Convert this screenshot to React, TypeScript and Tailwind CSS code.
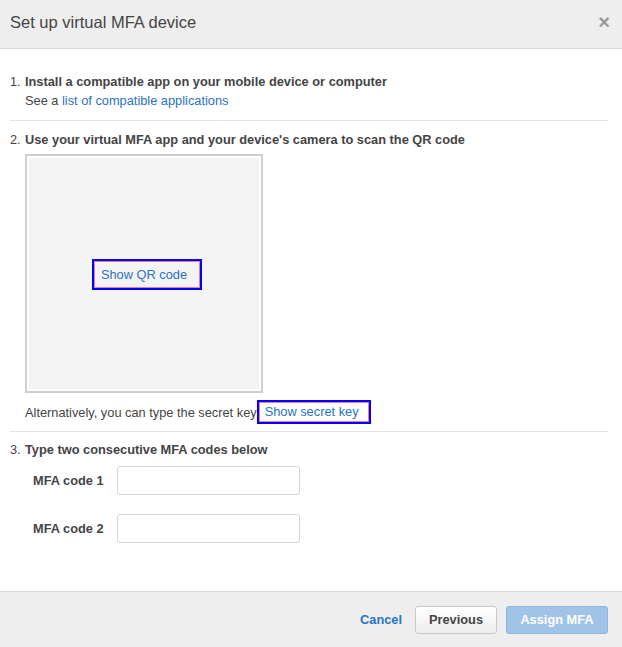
import React from "react";

const font = { fontFamily: '"Liberation Sans", Arial, sans-serif' };

const App = () => {
  return (
    <div
      className="w-[622px] h-[647px] flex flex-col bg-white text-[12.8px] leading-[19px] text-[#444]"
      style={font}
    >
      {/* Header */}
      <div className="h-[49px] shrink-0 bg-[#eeeeee] border-b border-[#d9d9d9] flex items-start justify-between pl-[10px] pr-[12px] pt-[12px]">
        <h1 className="text-[16.5px] leading-[20px] text-[#444]">Set up virtual MFA device</h1>
        <button className="text-[#999] text-[20px] leading-[20px] font-bold">×</button>
      </div>

      {/* Body */}
      <div className="flex-1 pl-[10px] pr-[14px] pt-[23px]">
        {/* Step 1 */}
        <div className="flex">
          <span className="w-[15px] shrink-0">1.</span>
          <div>
            <div className="font-bold">Install a compatible app on your mobile device or computer</div>
            <div>
              See a <a className="text-[#2a73c5] cursor-pointer">list of compatible applications</a>
            </div>
          </div>
        </div>

        <div className="border-t border-[#e3e3e3] mt-[10px] mb-[9px]" />

        {/* Step 2 */}
        <div className="flex">
          <span className="w-[15px] shrink-0">2.</span>
          <div>
            <div className="font-bold">Use your virtual MFA app and your device's camera to scan the QR code</div>
            <div className="mt-[5px] w-[238px] h-[239px] border-2 border-[#cfcfcf] bg-white p-[2px]">
              <div className="w-full h-full bg-[#f4f4f4] flex items-center justify-center pl-[6px] pt-[1px]">
                <span className="border-2 border-[#0000ff] inline-block">
                  <span className="block border border-[#f08080] pl-[6px] pr-[12px] pt-[4px] pb-[3px] text-[#2a73c5] leading-[18px]">
                    Show QR code
                  </span>
                </span>
              </div>
            </div>
            <div className="mt-[7px] flex items-center">
              <span>Alternatively, you can type the secret key</span>
              <span className="border-2 border-[#0000ff] inline-block">
                <span className="block border border-[#f08080] pl-[5px] pr-[9px] text-[#2a73c5] leading-[18px]">
                  Show secret key
                </span>
              </span>
            </div>
          </div>
        </div>

        <div className="border-t border-[#e3e3e3] mt-[7px] mb-[8px]" />

        {/* Step 3 */}
        <div className="flex">
          <span className="w-[15px] shrink-0">3.</span>
          <div>
            <div className="font-bold">Type two consecutive MFA codes below</div>
            <div className="mt-[7px] pl-[8px] flex flex-col gap-[19px]">
              <label className="flex items-center">
                <span className="w-[84px] font-bold">MFA code 1</span>
                <input
                  type="text"
                  className="w-[183px] h-[29px] border border-[#d5d5d5] rounded-[3px] px-2 outline-none"
                />
              </label>
              <label className="flex items-center">
                <span className="w-[84px] font-bold">MFA code 2</span>
                <input
                  type="text"
                  className="w-[183px] h-[29px] border border-[#d5d5d5] rounded-[3px] px-2 outline-none"
                />
              </label>
            </div>
          </div>
        </div>
      </div>

      {/* Footer */}
      <div className="h-[56px] shrink-0 bg-[#eeeeee] border-t border-[#d9d9d9] flex items-center justify-end pr-[14px]">
        <button className="font-bold text-[#2a73c5] mr-[13px]">Cancel</button>
        <button className="h-[28px] w-[82px] rounded-[3px] border border-[#c8c8c8] bg-gradient-to-b from-white to-[#ededed] font-bold text-[#444] mr-[9px]">
          Previous
        </button>
        <button className="h-[28px] w-[102px] rounded-[3px] border border-[#8fb4de] bg-[#a2c3e8] font-bold text-white">
          Assign MFA
        </button>
      </div>
    </div>
  );
};

export default App;
